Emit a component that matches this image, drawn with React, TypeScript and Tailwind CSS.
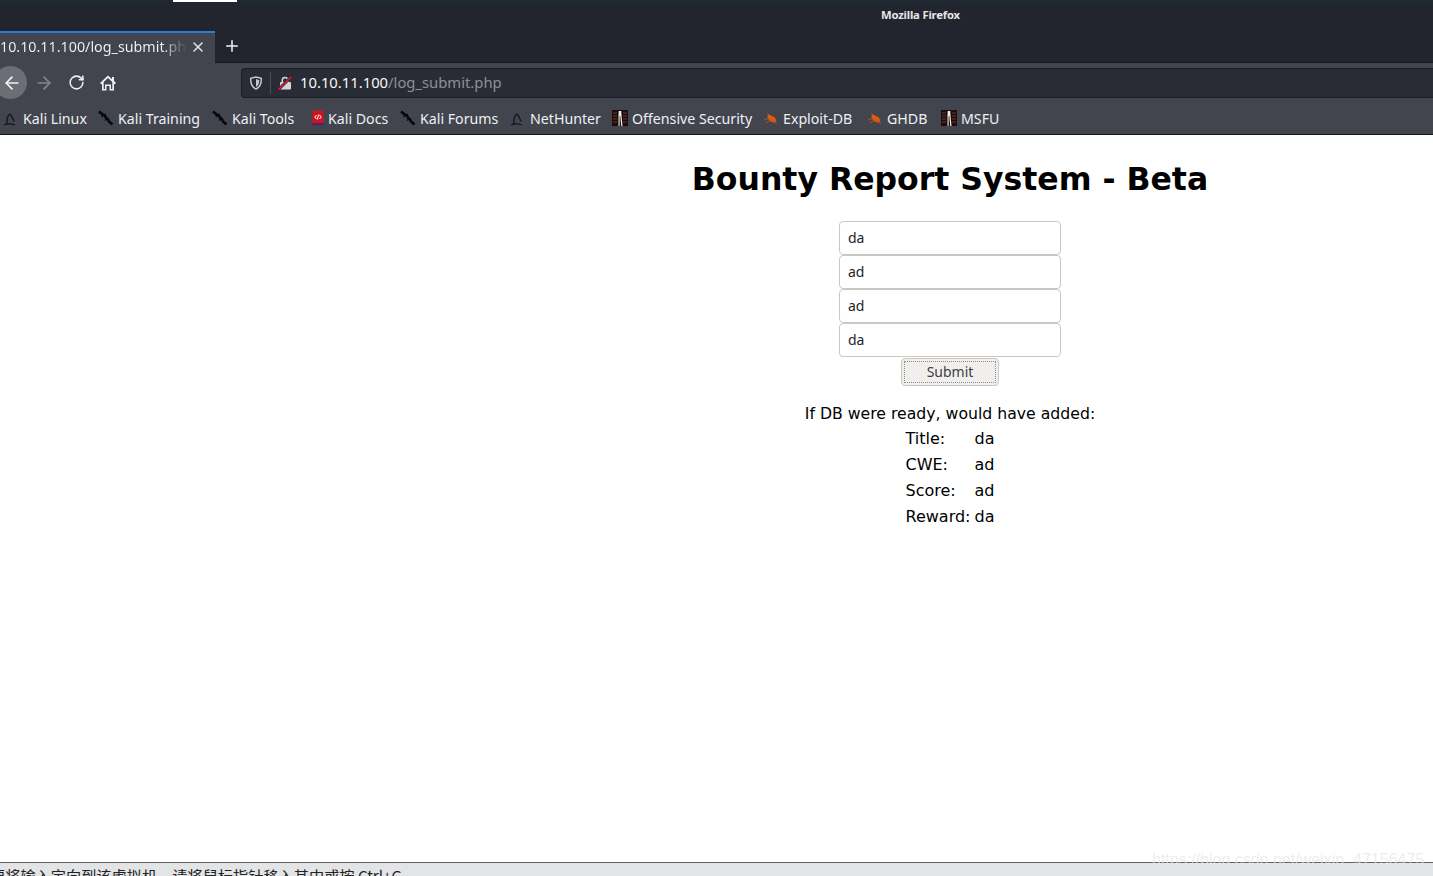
import { ArrowLeft, ArrowRight, Plus, RotateCw, X } from "lucide-react";

const KaliMark = () => (
  <svg width="16" height="16" viewBox="0 0 16 16" fill="none" className="shrink-0">
    <path d="M3.500 14c.5-2 .3-4.200.8-6 .5-2 1.500-3.200 2.700-3.800 1.800 1.300 2.700 4 4 7.300" stroke="#15171c" strokeWidth="1.400" />
    <path d="M1 15c2.800-1.500 6-1.600 11-.3" stroke="#15171c" strokeWidth="1.100" />
  </svg>
);

const Blade = () => (
  <svg width="16" height="16" viewBox="0 0 16 16" fill="none" className="shrink-0">
    <path d="M1 1.500l4 3.300 1.800.4 1 2.300 2.400 2 .6 1.800 3.600 3.200" stroke="#07080a" strokeWidth="2.600" />
    <path d="M6 3.800L3.800 7" stroke="#07080a" strokeWidth="1.400" />
    <path d="M9 8.500l-2 2" stroke="#07080a" strokeWidth="1.200" />
  </svg>
);

const DocsBook = () => (
  <svg width="12" height="16" viewBox="0 0 12 16" className="shrink-0">
    <rect x="0.500" y="0.500" width="11" height="15" rx="1" fill="#d3121c" />
    <rect x="0.500" y="13" width="11" height="2.500" fill="#3c2a70" />
    <path d="M4.500 5L2.800 7l1.700 2M7.500 5l1.700 2-1.700 2M6.700 4.500L5.300 9.500" stroke="#fff" strokeWidth="1" fill="none" />
  </svg>
);

const OffsecTile = () => (
  <svg width="16" height="16" viewBox="0 0 16 16" className="shrink-0">
    <rect width="16" height="16" fill="#1c0c0c" />
    <path d="M1 3h4M1 6h4M1 9h4M1 12h4M11 3h4M11 6h4M11 9h4M11 12h4" stroke="#6b3a34" strokeWidth="1" />
    <path d="M6.500 16V5L6.700 1h2.600l.2 4 1 11H9.200L8.300 6h-.6L7.600 16z" fill="#f1ece8" />
  </svg>
);

const Bug = () => (
  <svg width="16" height="16" viewBox="0 0 16 16" className="shrink-0">
    <path d="M5 4l7 3.500 1.500 4-3.500 1L6 10.500 4.500 7z" fill="#e2570f" />
    <path d="M1 10l4-1.500M3 13l4-2.500M4 3l3 3M11 12l3 2" stroke="#b95a24" strokeWidth="0.800" />
  </svg>
);

const bookmarks = [
  { icon: <KaliMark />, label: "Kali Linux", className: "w-[98px] pl-[3px]" },
  { icon: <Blade />, label: "Kali Training", className: "w-[114px]" },
  { icon: <Blade />, label: "Kali Tools", className: "w-[98px]" },
  { icon: <DocsBook />, label: "Kali Docs", className: "w-[90px] pl-[2px]" },
  { icon: <Blade />, label: "Kali Forums", className: "w-[110px]" },
  { icon: <KaliMark />, label: "NetHunter", className: "w-[102px]" },
  { icon: <OffsecTile />, label: "Offensive Security", className: "w-[151px]" },
  { icon: <Bug />, label: "Exploit-DB", className: "w-[104px]" },
  { icon: <Bug />, label: "GHDB", className: "w-[74px]" },
  { icon: <OffsecTile />, label: "MSFU", className: "w-[70px]" },
];

const fields = ["da", "ad", "ad", "da"];

const results = [
  ["Title:", "da"],
  ["CWE:", "ad"],
  ["Score:", "ad"],
  ["Reward:", "da"],
];

export default function App() {
  return (
    <div className="relative flex h-[876px] w-[1433px] flex-col overflow-hidden bg-white font-['Noto_Sans',sans-serif]">
      {/* desktop strip above the window */}
      <div className="flex h-[2px] bg-[#1c2a36]">
        <div className="ml-[173px] w-[64px] bg-white" />
      </div>

      <div className="flex h-[29px] items-center bg-[#23252e] pl-[881px] pb-[2px]">
        <span className="text-[11.300px] font-bold tracking-[-0.200px] text-[#e6e6e8]">Mozilla Firefox</span>
      </div>

      {/* tabs */}
      <div className="flex h-[32px] bg-[#23252e]">
        <div className="flex w-[215px] items-center border-t-2 border-[#2f78e4] bg-[#42454e] pb-[3px]">
          <span className="w-[187px] overflow-hidden whitespace-nowrap bg-gradient-to-l from-[#42454e] to-[#f5f5f6] to-[14%] bg-clip-text text-[14.300px] text-transparent">
            10.10.11.100/log_submit.php
          </span>
          <X size={16} strokeWidth={2.200} className="ml-[3px] text-[#e4e5e7]" />
        </div>
        <div className="flex flex-1 items-center border-b border-[#15171c] pb-[2px] pl-[8px]">
          <Plus size={18} strokeWidth={2} className="text-[#f4f4f5]" />
        </div>
      </div>

      {/* toolbar */}
      <div className="flex h-[41px] items-center bg-[#42454e] pb-[2px]">
        <div className="-ml-[6px] flex h-[33px] w-[33px] items-center justify-center rounded-full bg-[#6c6e75]">
          <ArrowLeft size={20} strokeWidth={2} className="ml-[2px] text-[#f4f4f5]" />
        </div>
        <ArrowRight size={20} strokeWidth={2} className="ml-[7px] text-[#84868c]" />
        <RotateCw size={17} strokeWidth={2.200} className="ml-[14px] text-[#f0f0f2]" />
        <svg width="18" height="18" viewBox="0 0 18 18" className="ml-[14px] shrink-0">
          <path
            d="M9 1.500L1 9l1.300 1.300L3 9.700V16.500h4.500v-4.500h3v4.500H15V9.700l.7.600L17 9l-2-1.900V3h-2v2.200z M9 4l4.300 4v7h-1.300v-4.500H6V15H4.700V8z"
            fill="#f0f0f2"
            fillRule="evenodd"
          />
        </svg>
        <div className="ml-[124px] flex h-[30px] flex-1 items-center rounded-l-[4px] border border-r-0 border-[#1c1e25] bg-[#2a2c35]">
          <svg width="16" height="16" viewBox="0 0 16 16" fill="none" className="ml-[6px] shrink-0">
            <path d="M8 2l5.300 1.300c.2 5-1.400 8.800-5.300 10.700C4.100 12.100 2.500 8.300 2.700 3.300z" stroke="#c6c7cb" strokeWidth="1.500" />
            <path d="M8 4v8c2-1.300 3.200-3.500 3.300-6.800z" fill="#c6c7cb" />
          </svg>
          <div className="ml-[6px] h-[22px] w-px bg-[#4a4c55]" />
          <svg width="16" height="16" viewBox="0 0 16 16" fill="none" className="ml-[6px] shrink-0">
            <path d="M5.300 7V5.300a2.700 2.700 0 015.400 0V7" stroke="#d5d6d9" strokeWidth="1.500" />
            <rect x="3" y="7" width="11" height="7.500" rx="1" fill="#d5d6d9" />
            <path d="M1.500 14.500L14 2" stroke="#2a2c35" strokeWidth="3" />
            <path d="M1.500 14.500L14 2" stroke="#e5173f" strokeWidth="1.600" />
          </svg>
          <span className="ml-[7px] text-[14.800px] text-[#f7f7f8]">
            10.10.11.100<span className="text-[#8d8f96]">/log_submit.php</span>
          </span>
        </div>
      </div>

      {/* bookmarks */}
      <div className="flex h-[31px] items-center border-b border-[#15171c] bg-[#42454e] pb-[1px]">
        {bookmarks.map((b) => (
          <div key={b.label} className={`flex shrink-0 items-center gap-[4px] ${b.className}`}>
            {b.icon}
            <span className="whitespace-nowrap text-[14.200px] text-[#eef0f3]">{b.label}</span>
          </div>
        ))}
      </div>

      {/* page */}
      <main className="flex flex-1 flex-col items-center pl-[467px] font-['DejaVu_Sans',sans-serif] text-black">
        <h1 className="mt-[22px] text-[31.500px] leading-[44px] font-bold">Bounty Report System - Beta</h1>
        <div className="mt-[20px] flex flex-col">
          {fields.map((f, i) => (
            <input
              key={i}
              readOnly
              value={f}
              className="h-[34px] w-[222px] rounded-[4px] border border-[#cdc7c2] bg-white px-[8px] pb-[2px] font-['Noto_Sans',sans-serif] text-[14px] text-[#1f232b]"
            />
          ))}
        </div>
        <button className="mt-px flex h-[28px] w-[98px] items-center justify-center rounded-[4px] border border-[#cdc7c2] bg-[#f1efed] p-[2px] font-['Noto_Sans',sans-serif] text-[14px] text-[#3d3d40]">
          <span className="flex h-full w-full items-center justify-center border border-dotted border-[#8f8c88] pb-[2px]">Submit</span>
        </button>
        <p className="mt-[15px] text-[15.700px] leading-[26px]">If DB were ready, would have added:</p>
        <table className="-mt-px text-[16px] leading-[26px]">
          <tbody>
            {results.map(([k, v]) => (
              <tr key={k}>
                <td className="w-[69px] p-0">{k}</td>
                <td className="p-0">{v}</td>
              </tr>
            ))}
          </tbody>
        </table>
      </main>

      {/* vm hint bar, cut off by the window edge */}
      <div className="h-[14px] overflow-hidden border-t border-[#5f6063] bg-[#e3e4e6]">
        <p className="-ml-[10px] whitespace-nowrap pt-[2px] font-['Noto_Sans_CJK_SC','Liberation_Sans',sans-serif] text-[15.200px] leading-[21px] text-[#222]">
          要将输入定向到该虚拟机，请将鼠标指针移入其中或按 Ctrl+G。
        </p>
      </div>

      <span className="absolute top-[848px] left-[1152px] font-['Liberation_Sans',sans-serif] text-[16px] text-[#e6e6e6]/70">
        https://blog.csdn.net/weixin_47156475
      </span>
    </div>
  );
}
